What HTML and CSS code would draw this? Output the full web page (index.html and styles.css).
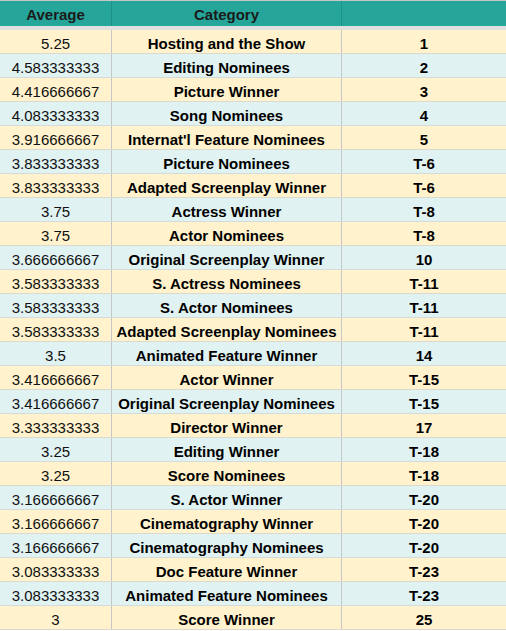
FILE: index.html
```html
<!DOCTYPE html>
<html>
<head>
<meta charset="utf-8">
<link rel="stylesheet" href="styles.css">
</head>
<body>
<div class="sheet">
  <div class="row head"><div class="cell">Average</div><div class="cell">Category</div><div class="cell"></div></div>
  <div class="row y"><div class="cell num">5.25</div><div class="cell">Hosting and the Show</div><div class="cell">1</div></div>
  <div class="row b"><div class="cell num">4.583333333</div><div class="cell">Editing Nominees</div><div class="cell">2</div></div>
  <div class="row y"><div class="cell num">4.416666667</div><div class="cell">Picture Winner</div><div class="cell">3</div></div>
  <div class="row b"><div class="cell num">4.083333333</div><div class="cell">Song Nominees</div><div class="cell">4</div></div>
  <div class="row y"><div class="cell num">3.916666667</div><div class="cell">Internat'l Feature Nominees</div><div class="cell">5</div></div>
  <div class="row b"><div class="cell num">3.833333333</div><div class="cell">Picture Nominees</div><div class="cell">T-6</div></div>
  <div class="row y"><div class="cell num">3.833333333</div><div class="cell">Adapted Screenplay Winner</div><div class="cell">T-6</div></div>
  <div class="row b"><div class="cell num">3.75</div><div class="cell">Actress Winner</div><div class="cell">T-8</div></div>
  <div class="row y"><div class="cell num">3.75</div><div class="cell">Actor Nominees</div><div class="cell">T-8</div></div>
  <div class="row b"><div class="cell num">3.666666667</div><div class="cell">Original Screenplay Winner</div><div class="cell">10</div></div>
  <div class="row y"><div class="cell num">3.583333333</div><div class="cell">S. Actress Nominees</div><div class="cell">T-11</div></div>
  <div class="row b"><div class="cell num">3.583333333</div><div class="cell">S. Actor Nominees</div><div class="cell">T-11</div></div>
  <div class="row y"><div class="cell num">3.583333333</div><div class="cell">Adapted Screenplay Nominees</div><div class="cell">T-11</div></div>
  <div class="row b"><div class="cell num">3.5</div><div class="cell">Animated Feature Winner</div><div class="cell">14</div></div>
  <div class="row y"><div class="cell num">3.416666667</div><div class="cell">Actor Winner</div><div class="cell">T-15</div></div>
  <div class="row b"><div class="cell num">3.416666667</div><div class="cell">Original Screenplay Nominees</div><div class="cell">T-15</div></div>
  <div class="row y"><div class="cell num">3.333333333</div><div class="cell">Director Winner</div><div class="cell">17</div></div>
  <div class="row b"><div class="cell num">3.25</div><div class="cell">Editing Winner</div><div class="cell">T-18</div></div>
  <div class="row y"><div class="cell num">3.25</div><div class="cell">Score Nominees</div><div class="cell">T-18</div></div>
  <div class="row b"><div class="cell num">3.166666667</div><div class="cell">S. Actor Winner</div><div class="cell">T-20</div></div>
  <div class="row y"><div class="cell num">3.166666667</div><div class="cell">Cinematography Winner</div><div class="cell">T-20</div></div>
  <div class="row b"><div class="cell num">3.166666667</div><div class="cell">Cinematography Nominees</div><div class="cell">T-20</div></div>
  <div class="row y"><div class="cell num">3.083333333</div><div class="cell">Doc Feature Winner</div><div class="cell">T-23</div></div>
  <div class="row b"><div class="cell num">3.083333333</div><div class="cell">Animated Feature Nominees</div><div class="cell">T-23</div></div>
  <div class="row y"><div class="cell num">3</div><div class="cell">Score Winner</div><div class="cell">25</div></div>
</div>
</body>
</html>
```

FILE: styles.css
```css
html, body {
  margin: 0;
  padding: 0;
  background: #ffffff;
}

.sheet {
  width: 506px;
  border-top: 1px solid #c6c6c6;
  font-family: "Liberation Sans", Arial, sans-serif;
  font-size: 15px;
  color: #000000;
}

.row {
  display: grid;
  grid-template-columns: 112px 230px 164px;
}

.cell {
  box-sizing: border-box;
  height: 23px;
  padding-top: 4px;
  line-height: 19px;
  text-align: center;
  white-space: nowrap;
  overflow: hidden;
  font-weight: bold;
  border-right: 1px solid #c7c7c7;
}

.cell:last-child {
  border-right: none;
}

.cell.num {
  font-weight: normal;
  color: #111111;
}

.head {
  background: #26a69a;
  border-bottom: 4px solid #e0e0e0;
}

.head .cell {
  height: 25px;
  padding-top: 3px;
  line-height: 22px;
  color: #1a1a1a;
  border-right-color: #1f9186;
}

.y {
  background: #fff2cc;
  border-bottom: 1px solid #dcd9cf;
}

.b {
  background: #e0f2f1;
  border-bottom: 1px solid #d3dcd9;
}
```
